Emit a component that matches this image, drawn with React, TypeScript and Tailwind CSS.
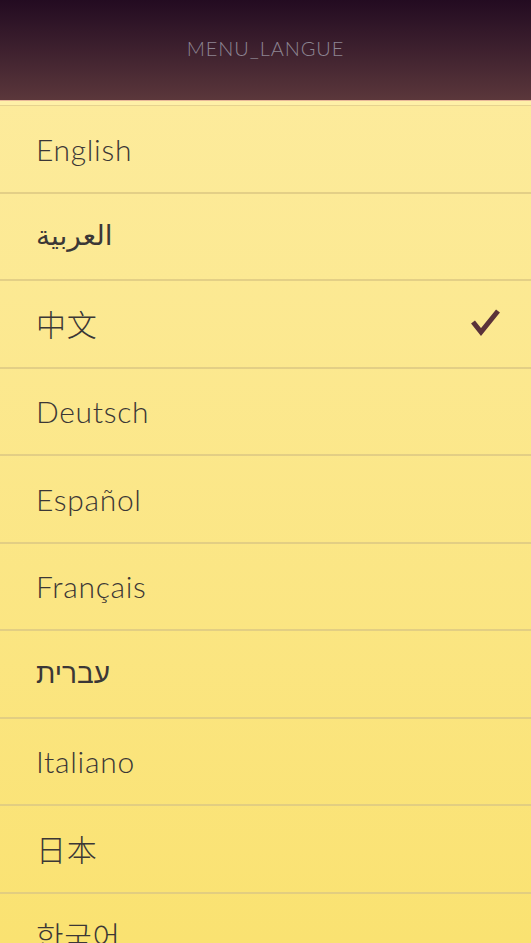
import React from "react";

const langs = [
  { label: "العربية", key: "ar" },
];

const list = [
  { label: "English" },
  { label: "العربية", rtl: true },
  { label: "中文", checked: true },
  { label: "Deutsch" },
  { label: "Español" },
  { label: "Français" },
  { label: "עברית", rtl: true },
  { label: "Italiano" },
  { label: "日本" },
  { label: "한국어" },
];

export default function App() {
  void langs;
  return (
    <div
      className="w-[531px] h-[943px] overflow-hidden flex flex-col bg-gradient-to-b from-[#fdeca0] to-[#fae271]"
      style={{ fontFamily: 'Lato, "Noto Sans", "Noto Sans CJK SC", sans-serif' }}
    >
      <div className="h-[100px] shrink-0 flex items-center justify-center bg-gradient-to-b from-[#230b21] to-[#5b373b]">
        <span className="text-[20px] font-light tracking-[0.9px] text-[#8d8592] mb-[4px]">MENU_LANGUE</span>
      </div>
      <div className="h-[1px] bg-[#e8b89a] shrink-0" />
      <div className="h-[5px] shrink-0 border-b border-[#e6d38f] bg-[#fef0a8]" />
      <div className="flex flex-col">
        {list.map((l) =>
          l.rtl ? (
            <div
              key={l.label}
              className="h-[87.5px] shrink-0 flex items-center justify-between pl-[36px] pr-[28px] border-b-2 border-[#dcc883]/80"
            >
              <span
                className="text-[28px] font-normal text-[#3b3736] leading-none"
                style={{ fontFamily: '"Liberation Sans", "DejaVu Sans", sans-serif' }}
              >
                {l.label}
              </span>
            </div>
          ) : (
            <div
              key={l.label}
              className="h-[87.5px] shrink-0 flex items-center justify-between pl-[36px] pr-[28px] border-b-2 border-[#dcc883]/80"
            >
              <span className="text-[30px] font-light tracking-[0.7px] text-[#3b3736] leading-none">{l.label}</span>
              {l.checked && (
                <svg width="34" height="34" viewBox="0 0 34 34">
                  <polyline
                    points="4,15 12,25 29,4"
                    fill="none"
                    stroke="#5a3239"
                    strokeWidth="5"
                    strokeLinejoin="miter"
                  />
                </svg>
              )}
            </div>
          )
        )}
      </div>
    </div>
  );
}
